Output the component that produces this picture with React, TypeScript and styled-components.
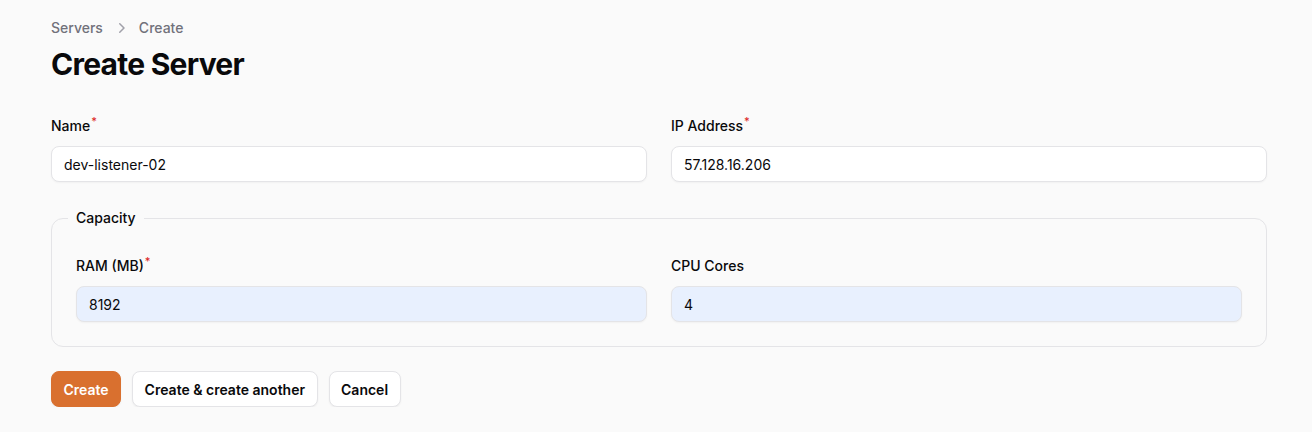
import React from "react";
import styled, { createGlobalStyle } from "styled-components";

const Global = createGlobalStyle`
  * { box-sizing: border-box; }
  html, body { margin: 0; padding: 0; background: #fafafa; }
  body { font-family: Inter, "Noto Sans", sans-serif; color: #09090b; -webkit-font-smoothing: antialiased; }
`;

const Page = styled.main`
  padding: 18px 45px 0 51px;
  display: flex;
  flex-direction: column;
`;

const Header = styled.header`
  display: flex;
  flex-direction: column;
  gap: 8px;
`;

const Crumbs = styled.nav`
  display: flex;
  align-items: center;
  gap: 8px;
  font-size: 14px;
  line-height: 20px;
  font-weight: 500;
  color: #71717a;
`;

const Chevron = styled.svg`
  width: 20px;
  height: 20px;
  color: #a1a1aa;
`;

const Title = styled.h1`
  margin: 0;
  font-size: 30px;
  line-height: 36px;
  font-weight: 700;
  letter-spacing: -0.025em;
  color: #09090b;
`;

const Form = styled.form`
  margin-top: 32px;
  display: flex;
  flex-direction: column;
  gap: 24px;
`;

const Grid = styled.div`
  display: grid;
  grid-template-columns: 1fr 1fr;
  gap: 24px;
`;

const Field = styled.div`
  display: flex;
  flex-direction: column;
  gap: 8px;
`;

const Label = styled.label`
  display: block;
  height: 24px;
  font-size: 14px;
  line-height: 24px;
  font-weight: 500;
  color: #09090b;
`;

const Req = styled.span`
  position: relative;
  top: -6px;
  margin-left: 1px;
  line-height: 0;
  color: #dc2626;
  font-weight: 500;
  font-size: 11px;
`;

const Input = styled.input<{ $filled?: boolean }>`
  height: 36px;
  width: 100%;
  border: 1px solid #e4e4e7;
  border-radius: 8px;
  background: ${(p) => (p.$filled ? "#e8f0fe" : "#ffffff")};
  box-shadow: 0 1px 2px rgba(0, 0, 0, 0.04);
  padding: 0 12px;
  font-family: inherit;
  font-size: 14px;
  color: #09090b;
  outline: none;
`;

const Fieldset = styled.fieldset`
  margin: 0;
  border: 1px solid #e4e4e7;
  border-radius: 12px;
  padding: 24px;
  min-width: 0;
`;

const Legend = styled.legend`
  margin-left: -8px;
  padding: 0 8px;
  font-size: 14px;
  line-height: 24px;
  font-weight: 500;
  color: #09090b;
`;

const Actions = styled.div`
  display: flex;
  gap: 11px;
`;

const Button = styled.button<{ $primary?: boolean }>`
  height: 36px;
  padding: 0 11.5px;
  border-radius: 8px;
  font-family: inherit;
  font-size: 14px;
  font-weight: 600;
  cursor: pointer;
  border: 1px solid ${(p) => (p.$primary ? "#d9702f" : "#e4e4e7")};
  background: ${(p) => (p.$primary ? "#d9702f" : "#ffffff")};
  color: ${(p) => (p.$primary ? "#ffffff" : "#09090b")};
  box-shadow: 0 1px 2px rgba(0, 0, 0, 0.05);
`;

export default function App() {
  return (
    <>
      <Global />
      <Page>
        <Header>
          <Crumbs>
            <span>Servers</span>
            <Chevron viewBox="0 0 20 20" fill="currentColor">
              <path
                fillRule="evenodd"
                d="M8.22 5.22a.75.75 0 0 1 1.06 0l4.25 4.25a.75.75 0 0 1 0 1.06l-4.25 4.25a.75.75 0 0 1-1.06-1.06L11.94 10 8.22 6.28a.75.75 0 0 1 0-1.06Z"
                clipRule="evenodd"
              />
            </Chevron>
            <span>Create</span>
          </Crumbs>
          <Title>Create Server</Title>
        </Header>
        <Form onSubmit={(e) => e.preventDefault()}>
          <Grid>
            <Field>
              <Label>
                Name<Req>*</Req>
              </Label>
              <Input defaultValue="dev-listener-02" />
            </Field>
            <Field>
              <Label>
                IP Address<Req>*</Req>
              </Label>
              <Input defaultValue="57.128.16.206" />
            </Field>
          </Grid>
          <Fieldset>
            <Legend>Capacity</Legend>
            <Grid>
              <Field>
                <Label>
                  RAM (MB)<Req>*</Req>
                </Label>
                <Input $filled defaultValue="8192" />
              </Field>
              <Field>
                <Label>CPU Cores</Label>
                <Input $filled defaultValue="4" />
              </Field>
            </Grid>
          </Fieldset>
          <Actions>
            <Button $primary>Create</Button>
            <Button>Create &amp; create another</Button>
            <Button>Cancel</Button>
          </Actions>
        </Form>
      </Page>
    </>
  );
}
